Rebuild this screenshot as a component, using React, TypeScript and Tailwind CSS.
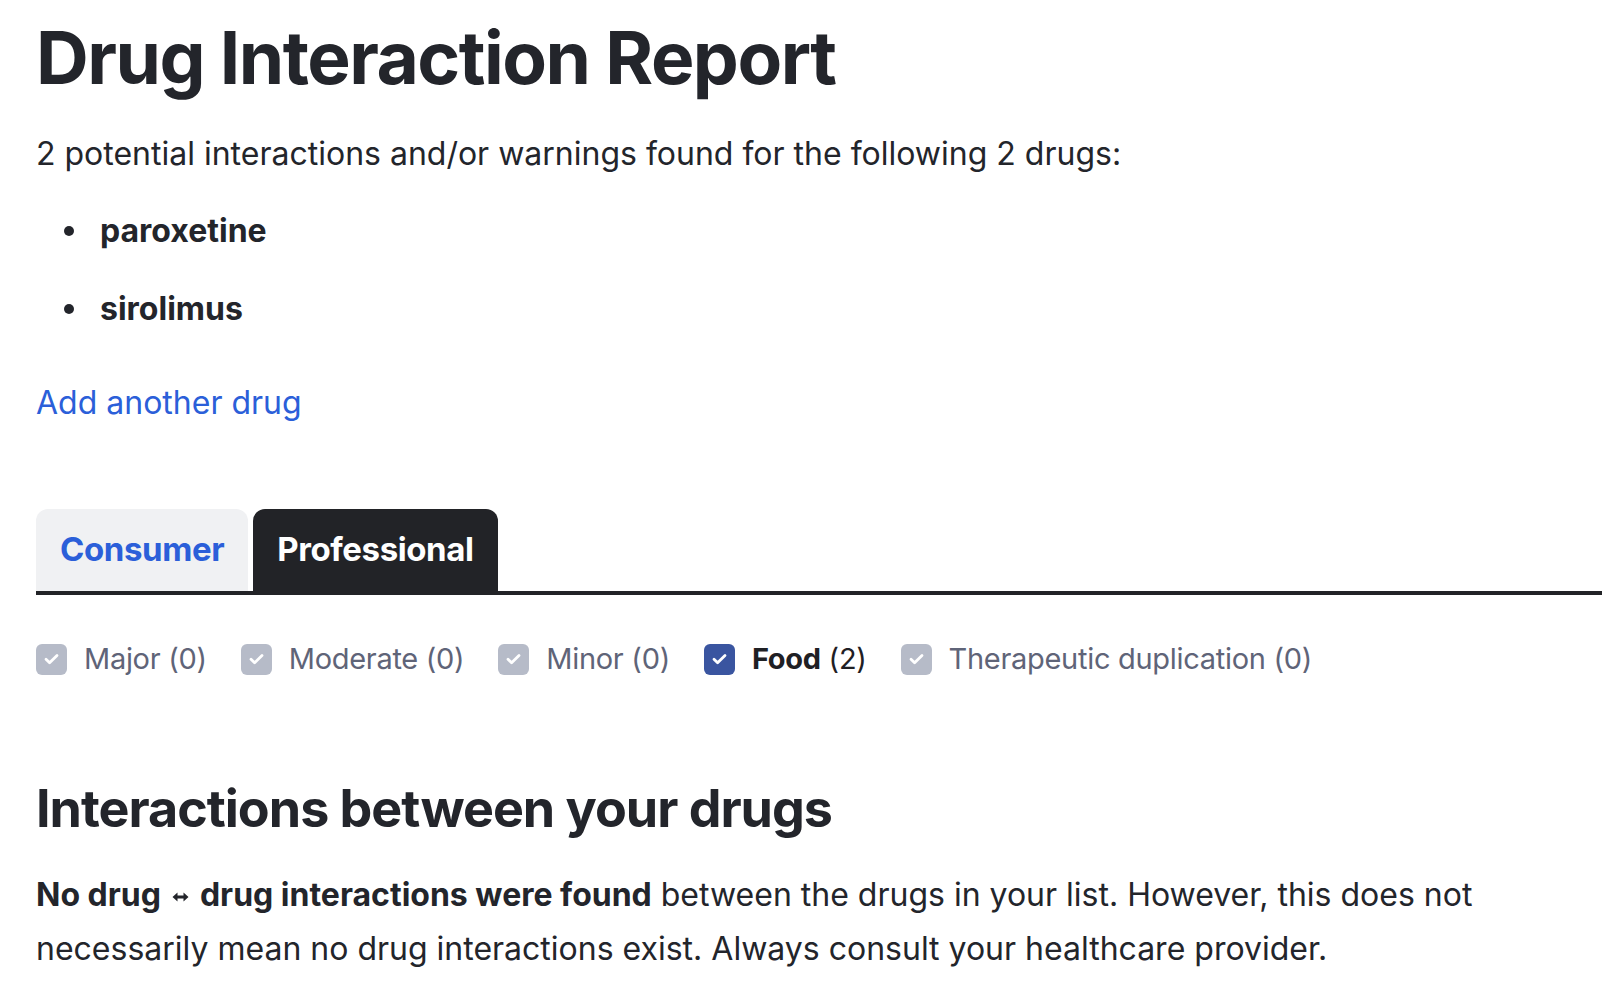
import React from 'react';

const filters = [
	{ label: 'Major', count: 0, checked: false },
	{ label: 'Moderate', count: 0, checked: false },
	{ label: 'Minor', count: 0, checked: false },
	{ label: 'Food', count: 2, checked: true },
	{ label: 'Therapeutic duplication', count: 0, checked: false },
];

const drugs = ['paroxetine', 'sirolimus'];

const Check: React.FC<{ on: boolean }> = ({ on }) => (
	<span
		className={`flex h-[31px] w-[31px] shrink-0 items-center justify-center rounded-[6px] ${on ? 'bg-[#3a55a0]' : 'bg-[#b6bbc8]'}`}
	>
		<svg width="15" height="12" viewBox="0 0 15 12" fill="none">
			<path d="M2 6.2l3.6 3.6L13 2.4" stroke="white" strokeWidth="2.8" strokeLinecap="round" strokeLinejoin="round" />
		</svg>
	</span>
);

const Arrow = () => (
	<svg width="19" height="12" viewBox="0 0 18 12" className="mx-[10px] inline-block align-middle">
		<path d="M1 6l5-4.5v3h6v-3L17 6l-5 4.5v-3H6v3z" fill="#23252b" />
	</svg>
);

const App: React.FC = () => {
	return (
		<div className="min-h-screen bg-white pl-[36px] text-[#23252b]" style={{ fontFamily: 'Inter, "Noto Sans", sans-serif' }}>
			<h1 className="pt-[14px] text-[73px] font-bold leading-[88px] tracking-[-1.5px]">Drug Interaction Report</h1>

			<p className="mt-[28px] text-[32px] leading-[48px]">
				2 potential interactions and/or warnings found for the following 2 drugs:
			</p>

			<ul className="mt-[29px] text-[32px] font-bold leading-[48px]">
				{drugs.map((d) => (
					<li key={d} className="mb-[30px] flex items-center">
						<span className="ml-[28px] mr-[26px] h-[10px] w-[10px] rounded-full bg-[#23252b]" />
						{d}
					</li>
				))}
			</ul>

			<a href="#" className="mt-[46px] block text-[32px] leading-[48px] text-[#2b5fd9]">
				Add another drug
			</a>

			<div className="mt-[82px] flex gap-[5px] border-b-4 border-[#222327]">
				<button className="rounded-t-[12px] bg-[#f0f1f3] px-[24px] pb-[16px] pt-[14px] text-[33px] font-bold leading-[52px] tracking-[-0.4px] text-[#2b5fd9]">
					Consumer
				</button>
				<button className="rounded-t-[12px] bg-[#222327] px-[24px] pb-[16px] pt-[14px] text-[33px] font-bold leading-[52px] tracking-[-0.4px] text-white">
					Professional
				</button>
			</div>

			<div className="mt-[44px] flex items-center gap-[34px]">
				{filters.map((f) => (
					<label key={f.label} className="flex items-center gap-[17px] text-[29px] leading-[40px] tracking-[-0.3px]">
						<Check on={f.checked} />
						<span className={f.checked ? 'text-[#1f2024]' : 'text-[#5f6478]'}>
							{f.checked ? <b className="font-bold">{f.label}</b> : f.label} ({f.count})
						</span>
					</label>
				))}
			</div>

			<h2 className="mt-[95px] text-[52px] font-bold leading-[70px] tracking-[-1px]">Interactions between your drugs</h2>

			<p className="mt-[24px] text-[32px] leading-[54px]">
				<b className="font-bold">No drug</b>
				<Arrow />
				<b className="font-bold">drug interactions were found</b> between the drugs in your list. However, this does not
				necessarily mean no drug interactions exist. Always consult your healthcare provider.
			</p>
		</div>
	);
};

export default App;
